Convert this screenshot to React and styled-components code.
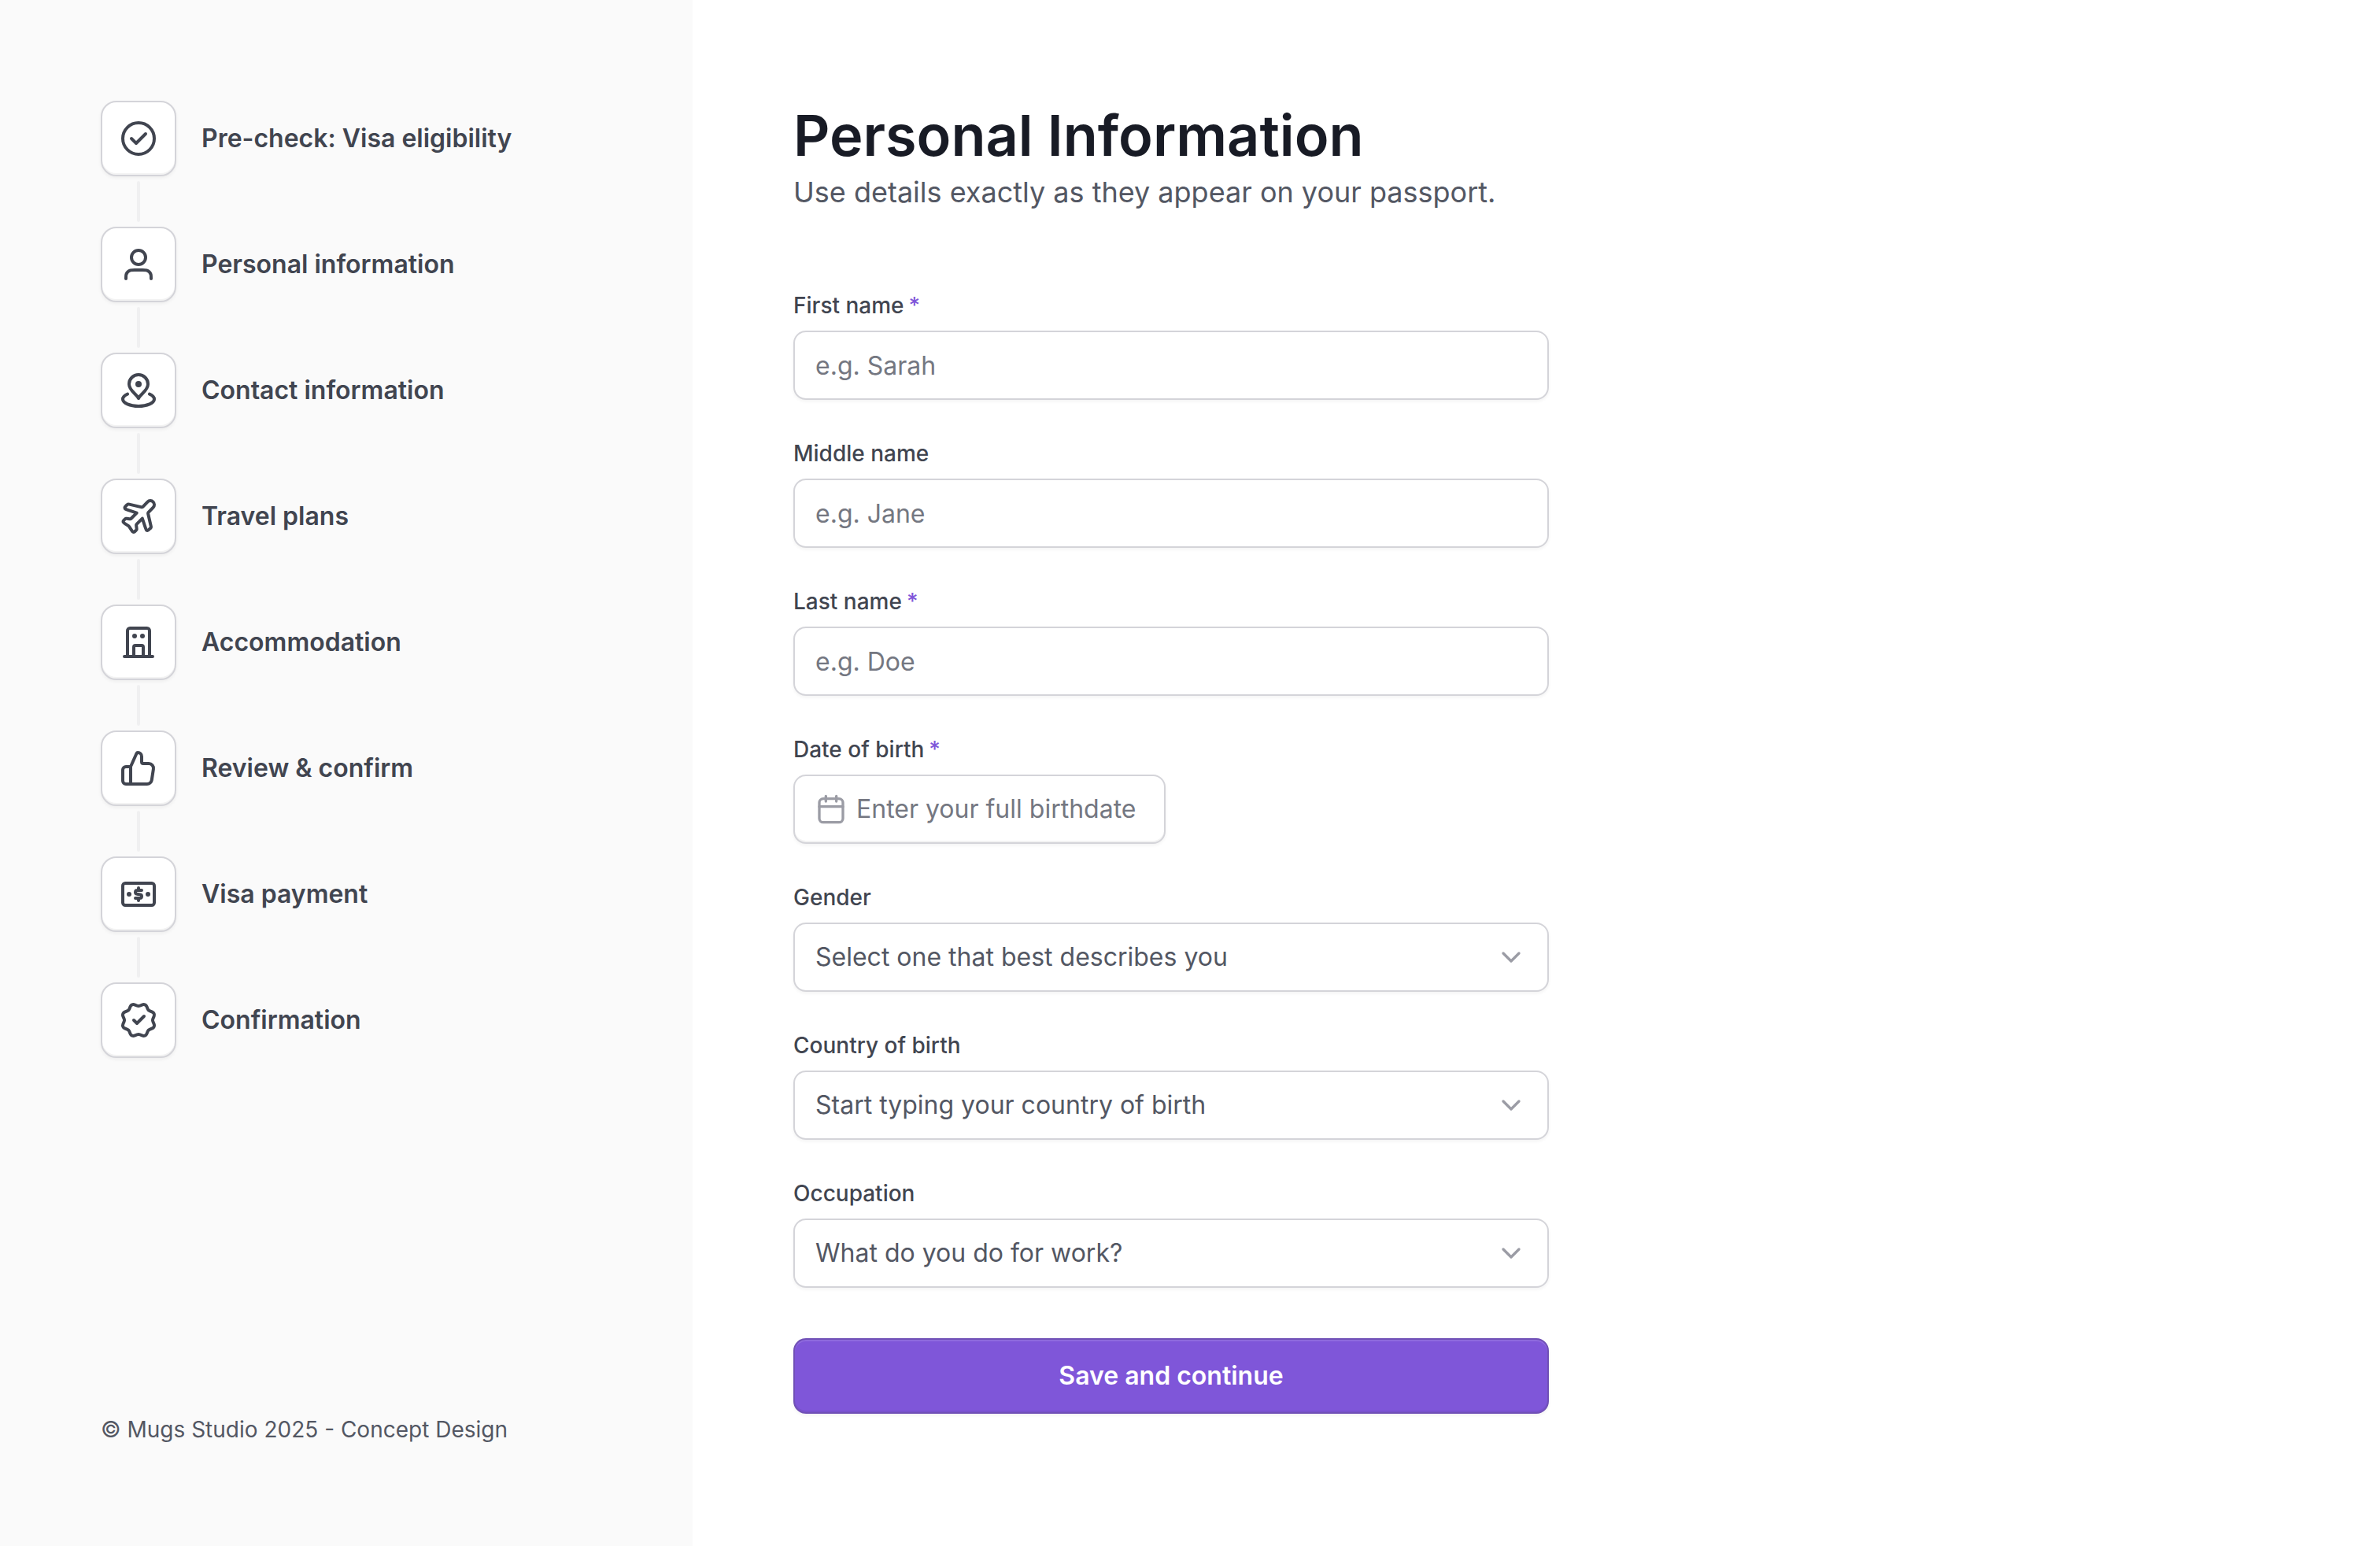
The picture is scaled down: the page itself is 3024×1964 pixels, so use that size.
import { Fragment } from 'react'
import styled, { createGlobalStyle } from 'styled-components'

const color = {
  white: '#ffffff',
  sidebar: '#fafafa',
  line: '#f0f0f1',
  border: '#d4d4d9',
  title: '#181b25',
  strong: '#414550',
  text: '#535763',
  placeholder: '#747781',
  icon: '#9b9ca5',
  purple: '#7f56d9',
  purpleDark: '#7050b6',
}

const GlobalStyle = createGlobalStyle`
  * {
    box-sizing: border-box;
    margin: 0;
    padding: 0;
  }

  body {
    background: ${color.white};
    color: ${color.text};
    font-family: Inter, 'Liberation Sans', sans-serif;
    font-size: 32px;
    line-height: 48px;
  }

  button,
  input,
  select {
    font: inherit;
  }
`

const Page = styled.div`
  display: flex;
  min-height: 100vh;
`

const Sidebar = styled.aside`
  display: flex;
  flex-direction: column;
  justify-content: space-between;
  flex: 0 0 880px;
  padding: 128px;
  background: ${color.sidebar};
`

const StepList = styled.ol`
  display: flex;
  flex-direction: column;
  list-style: none;
`

const StepItem = styled.li`
  display: flex;
  align-items: center;
  gap: 32px;
  color: ${color.strong};
  font-weight: 600;
`

const StepTile = styled.span`
  display: flex;
  align-items: center;
  justify-content: center;
  width: 96px;
  height: 96px;
  border: 2px solid ${color.border};
  border-radius: 20px;
  background: ${color.white};
  box-shadow:
    0 2px 4px rgba(10, 13, 18, 0.05),
    inset 0 -2px 0 rgba(10, 13, 18, 0.05);
`

const StepLine = styled.li`
  width: 4px;
  height: 52px;
  margin: 6px 46px;
  border-radius: 2px;
  background: ${color.line};
`

const Copyright = styled.p`
  font-size: 28px;
  line-height: 40px;
`

const Main = styled.main`
  flex: 1;
  padding: 128px;
`

const Form = styled.form`
  display: flex;
  flex-direction: column;
  gap: 48px;
  max-width: 960px;
  margin-top: 96px;
`

const Title = styled.h1`
  color: ${color.title};
  font-size: 72px;
  font-weight: 600;
  line-height: 88px;
`

const Subtitle = styled.p`
  font-size: 36px;
  line-height: 56px;
`

const Field = styled.div`
  display: flex;
  flex-direction: column;
  align-items: flex-start;
  gap: 12px;
`

const Label = styled.label`
  display: flex;
  gap: 6px;
  color: ${color.strong};
  font-size: 28px;
  font-weight: 500;
  line-height: 40px;
`

const Required = styled.span`
  color: ${color.purple};
`

const TextInput = styled.input`
  width: 100%;
  height: 88px;
  padding: 0 26px;
  border: 2px solid ${color.border};
  border-radius: 16px;
  background: ${color.white};
  color: ${color.title};
  box-shadow: 0 2px 4px rgba(10, 13, 18, 0.05);

  &::placeholder {
    color: ${color.placeholder};
    opacity: 1;
  }
`

const SelectBox = styled.div`
  display: grid;
  align-items: center;
  width: 100%;

  > * {
    grid-area: 1 / 1;
  }

  svg {
    justify-self: end;
    margin-right: 28px;
    color: ${color.icon};
    pointer-events: none;
  }
`

const Select = styled.select`
  appearance: none;
  width: 100%;
  height: 88px;
  padding: 0 80px 0 26px;
  border: 2px solid ${color.border};
  border-radius: 16px;
  background: ${color.white};
  color: ${color.text};
  box-shadow: 0 2px 4px rgba(10, 13, 18, 0.05);
`

const DateButton = styled.button`
  display: flex;
  align-items: center;
  gap: 12px;
  height: 88px;
  padding: 0 36px 0 26px;
  border: 2px solid ${color.border};
  border-radius: 16px;
  background: ${color.white};
  color: ${color.placeholder};
  box-shadow:
    0 2px 4px rgba(10, 13, 18, 0.05),
    inset 0 -2px 0 rgba(10, 13, 18, 0.05);
  cursor: pointer;

  svg {
    color: ${color.icon};
  }
`

const SubmitButton = styled.button`
  height: 96px;
  margin-top: 16px;
  border: 2px solid ${color.purpleDark};
  border-radius: 16px;
  background: ${color.purple};
  color: ${color.white};
  font-weight: 600;
  box-shadow:
    0 2px 4px rgba(10, 13, 18, 0.05),
    inset 0 2px 0 rgba(255, 255, 255, 0.12),
    inset 0 -2px 0 rgba(10, 13, 18, 0.06);
  cursor: pointer;
`

const Icon = ({ size = 48, children }) => (
  <svg
    width={size}
    height={size}
    viewBox='0 0 24 24'
    fill='none'
    stroke='currentColor'
    strokeWidth='2'
    strokeLinecap='round'
    strokeLinejoin='round'
    aria-hidden='true'
  >
    {children}
  </svg>
)

const Dot = ({ x, y, r = 1.5 }) => (
  <circle cx={x} cy={y} r={r} fill='currentColor' stroke='none' />
)

const steps = [
  {
    label: 'Pre-check: Visa eligibility',
    icon: (
      <>
        <circle cx='12' cy='12' r='10' />
        <path d='M7.5 12L10.5 15L16.5 9' />
      </>
    ),
  },
  {
    label: 'Personal information',
    icon: (
      <>
        <circle cx='12' cy='7.5' r='4.5' />
        <path d='M20 21C20 19.6044 20 18.9067 19.8278 18.3389C19.44 17.0605 18.4395 16.06 17.1611 15.6722C16.5933 15.5 15.8956 15.5 14.5 15.5H9.5C8.10444 15.5 7.40665 15.5 6.83886 15.6722C5.56045 16.06 4.56004 17.0605 4.17224 18.3389C4 18.9067 4 19.6044 4 21' />
      </>
    ),
  },
  {
    label: 'Contact information',
    icon: (
      <>
        <path d='M5 14.2864C3.14864 15.1031 2 16.2412 2 17.5C2 19.9853 6.47715 22 12 22C17.5228 22 22 19.9853 22 17.5C22 16.2412 20.8514 15.1031 19 14.2864' />
        <path d='M18 8C18 12.0637 13.5 14 12 17C10.5 14 6 12.0637 6 8C6 4.68629 8.68629 2 12 2C15.3137 2 18 4.68629 18 8Z' />
        <Dot x={12} y={8} r={2} />
      </>
    ),
  },
  {
    label: 'Travel plans',
    icon: (
      <path d='M17.7448 2.81298C18.7095 1.8165 20.3036 1.80361 21.2843 2.78436C22.2382 3.73823 22.2559 5.27921 21.3243 6.25499L18.5456 9.16457C18.3278 9.39265 18.219 9.50668 18.1518 9.64024C18.0924 9.75847 18.0571 9.88732 18.0478 10.0193C18.0374 10.1684 18.0728 10.3221 18.1438 10.6293L19.8717 18.1169C19.9444 18.4323 19.9808 18.59 19.9691 18.7426C19.9587 18.8776 19.921 19.0091 19.8582 19.1291C19.7873 19.2647 19.6729 19.3792 19.444 19.608L19.0732 19.9788C18.4671 20.585 18.164 20.888 17.8538 20.9429C17.583 20.9908 17.3043 20.925 17.0835 20.761C16.8306 20.5733 16.695 20.1666 16.424 19.3534L14.4142 13.3241L11.0689 16.6695C10.8692 16.8691 10.7694 16.969 10.7026 17.0866C10.6434 17.1907 10.6034 17.3047 10.5846 17.423C10.5633 17.5565 10.5789 17.6968 10.61 17.9775L10.7937 19.6309C10.8249 19.9116 10.8405 20.0519 10.8192 20.1854C10.8004 20.3037 10.7604 20.4177 10.7012 20.5219C10.6344 20.6394 10.5346 20.7393 10.3349 20.939L10.1374 21.1365C9.66434 21.6095 9.42781 21.8461 9.16496 21.9146C8.93442 21.9746 8.68999 21.9504 8.47571 21.8463C8.2314 21.7276 8.04585 21.4493 7.67475 20.8926L6.10643 18.5401C6.04013 18.4407 6.00698 18.391 5.96849 18.3459C5.9343 18.3058 5.89701 18.2685 5.85694 18.2343C5.81184 18.1958 5.76212 18.1627 5.66267 18.0964L3.31018 16.5281C2.75354 16.157 2.47521 15.9714 2.35649 15.7271C2.25236 15.5128 2.22816 15.2684 2.28824 15.0378C2.35674 14.775 2.59327 14.5385 3.06633 14.0654L3.26384 13.8679C3.46352 13.6682 3.56337 13.5684 3.68095 13.5016C3.78511 13.4424 3.89906 13.4024 4.01736 13.3836C4.15088 13.3623 4.29122 13.3779 4.57191 13.4091L6.22529 13.5928C6.50599 13.6239 6.64633 13.6395 6.77985 13.6182C6.89815 13.5994 7.0121 13.5594 7.11626 13.5002C7.23385 13.4334 7.33369 13.3336 7.53337 13.1339L10.8787 9.7886L4.84939 7.77884C4.03616 7.50776 3.62955 7.37222 3.44176 7.11932C3.27777 6.89848 3.212 6.61984 3.2599 6.34898C3.31477 6.03879 3.61784 5.73572 4.22399 5.12958L4.59476 4.7588C4.82365 4.52991 4.9381 4.41546 5.07369 4.34457C5.19368 4.28182 5.3251 4.24411 5.46015 4.23371C5.61277 4.22195 5.77035 4.25831 6.08522 4.33098L13.5439 6.05224C13.8537 6.12374 14.0086 6.15949 14.1573 6.14933C14.3159 6.13847 14.4707 6.09341 14.6095 6.0172C14.7497 5.94023 14.8658 5.82025 15.0982 5.58029L17.7448 2.81298Z' />
    ),
  },
  {
    label: 'Accommodation',
    icon: (
      <>
        <path d='M3 21H21M5 21V4.6C5 3.7 5.7 3 6.6 3H17.4C18.3 3 19 3.7 19 4.6V21' />
        <path d='M9 21V15C9 14.45 9.45 14 10 14H14C14.55 14 15 14.45 15 15V21' />
        <Dot x={9.5} y={8} />
        <Dot x={14.5} y={8} />
      </>
    ),
  },
  {
    label: 'Review & confirm',
    icon: (
      <path d='M7 22V11M2 13V20C2 21.1046 2.89543 22 4 22H17.4262C18.907 22 20.1662 20.9197 20.3914 19.4562L21.4683 12.4562C21.7479 10.6389 20.3418 9 18.5032 9H15C14.4477 9 14 8.55228 14 8V4.46584C14 3.10399 12.896 2 11.5342 2C11.2093 2 10.915 2.1913 10.7831 2.48812L7.26394 10.4061C7.10344 10.7673 6.74532 11 6.35013 11H4C2.89543 11 2 11.8954 2 13Z' />
    ),
  },
  {
    label: 'Visa payment',
    icon: (
      <>
        <rect x='2' y='5' width='20' height='14' rx='1.6' />
        <path d='M14 9.5H11.3C10.55 9.5 10 10 10 10.7C10 11.3 10.35 11.7 10.95 11.83L13.05 12.2C13.65 12.32 14 12.7 14 13.25C14 14 13.45 14.5 12.7 14.5H10M12 8V9.5M12 14.5V16' />
        <Dot x={6} y={12} />
        <Dot x={18} y={12} />
      </>
    ),
  },
  {
    label: 'Confirmation',
    icon: (
      <path d='M9 12L11 14L15.5 9.5M17.9012 4.99851C18.1071 5.49653 18.5024 5.8924 19.0001 6.09907L20.7452 6.82198C21.2433 7.02828 21.639 7.42399 21.8453 7.92206C22.0516 8.42012 22.0516 8.97974 21.8453 9.47781L21.1229 11.2218C20.9165 11.7201 20.9162 12.2803 21.1236 12.7783L21.8447 14.5218C21.9469 14.7685 21.9996 15.0329 21.9996 15.2999C21.9997 15.567 21.9471 15.8314 21.8449 16.0781C21.7427 16.3249 21.5929 16.549 21.4041 16.7378C21.2152 16.9266 20.991 17.0764 20.7443 17.1785L19.0004 17.9009C18.5023 18.1068 18.1065 18.5021 17.8998 18.9998L17.1769 20.745C16.9706 21.2431 16.575 21.6388 16.0769 21.8451C15.5789 22.0514 15.0193 22.0514 14.5212 21.8451L12.7773 21.1227C12.2792 20.9169 11.7198 20.9173 11.2221 21.1239L9.47689 21.8458C8.97912 22.0516 8.42001 22.0514 7.92237 21.8453C7.42473 21.6391 7.02925 21.2439 6.82281 20.7464L6.09972 19.0006C5.8938 18.5026 5.49854 18.1067 5.00085 17.9L3.25566 17.1771C2.75783 16.9709 2.36226 16.5754 2.15588 16.0777C1.94951 15.5799 1.94923 15.0205 2.1551 14.5225L2.87746 12.7786C3.08325 12.2805 3.08283 11.7211 2.8763 11.2233L2.15497 9.47678C2.0527 9.2301 2.00004 8.96568 2 8.69863C1.99996 8.43159 2.05253 8.16715 2.15472 7.92043C2.25691 7.67372 2.40671 7.44955 2.59557 7.26075C2.78442 7.07195 3.00862 6.92222 3.25537 6.8201L4.9993 6.09772C5.49687 5.89197 5.89248 5.4972 6.0993 5.00006L6.82218 3.25481C7.02848 2.75674 7.42418 2.36103 7.92222 2.15473C8.42027 1.94842 8.97987 1.94842 9.47792 2.15473L11.2218 2.87712C11.7199 3.08291 12.2793 3.08249 12.7771 2.87595L14.523 2.15585C15.021 1.94966 15.5804 1.9497 16.0784 2.15597C16.5763 2.36223 16.972 2.75783 17.1783 3.25576L17.9012 4.99851Z' />
    ),
  },
]

const FieldLabel = ({ id, required, children }) => (
  <Label htmlFor={id}>
    {children}
    {required && <Required>*</Required>}
  </Label>
)

const TextField = ({ id, label, placeholder, required }) => (
  <Field>
    <FieldLabel id={id} required={required}>
      {label}
    </FieldLabel>
    <TextInput id={id} type='text' placeholder={placeholder} required={required} />
  </Field>
)

const SelectField = ({ id, label, placeholder }) => (
  <Field>
    <FieldLabel id={id}>{label}</FieldLabel>
    <SelectBox>
      <Select id={id} defaultValue=''>
        <option value=''>{placeholder}</option>
      </Select>
      <Icon size={40}>
        <path d='M6 9L12 15L18 9' />
      </Icon>
    </SelectBox>
  </Field>
)

const App = () => {
  return (
    <>
      <GlobalStyle />
      <Page>
        <Sidebar>
          <StepList>
            {steps.map((step, index) => (
              <Fragment key={step.label}>
                {index > 0 && <StepLine aria-hidden='true' />}
                <StepItem>
                  <StepTile>
                    <Icon>{step.icon}</Icon>
                  </StepTile>
                  {step.label}
                </StepItem>
              </Fragment>
            ))}
          </StepList>
          <Copyright>© Mugs Studio 2025 - Concept Design</Copyright>
        </Sidebar>
        <Main>
          <Title>Personal Information</Title>
          <Subtitle>Use details exactly as they appear on your passport.</Subtitle>
          <Form onSubmit={(e) => e.preventDefault()}>
            <TextField id='firstName' label='First name' placeholder='e.g. Sarah' required />
            <TextField id='middleName' label='Middle name' placeholder='e.g. Jane' />
            <TextField id='lastName' label='Last name' placeholder='e.g. Doe' required />
            <Field>
              <FieldLabel id='birthDate' required>
                Date of birth
              </FieldLabel>
              <DateButton id='birthDate' type='button'>
                <Icon size={40}>
                  <rect x='3' y='4' width='18' height='18' rx='3' />
                  <path d='M3 10H21M8 2V6M16 2V6' />
                </Icon>
                Enter your full birthdate
              </DateButton>
            </Field>
            <SelectField
              id='gender'
              label='Gender'
              placeholder='Select one that best describes you'
            />
            <SelectField
              id='country'
              label='Country of birth'
              placeholder='Start typing your country of birth'
            />
            <SelectField
              id='occupation'
              label='Occupation'
              placeholder='What do you do for work?'
            />
            <SubmitButton type='submit'>Save and continue</SubmitButton>
          </Form>
        </Main>
      </Page>
    </>
  )
}

export default App
